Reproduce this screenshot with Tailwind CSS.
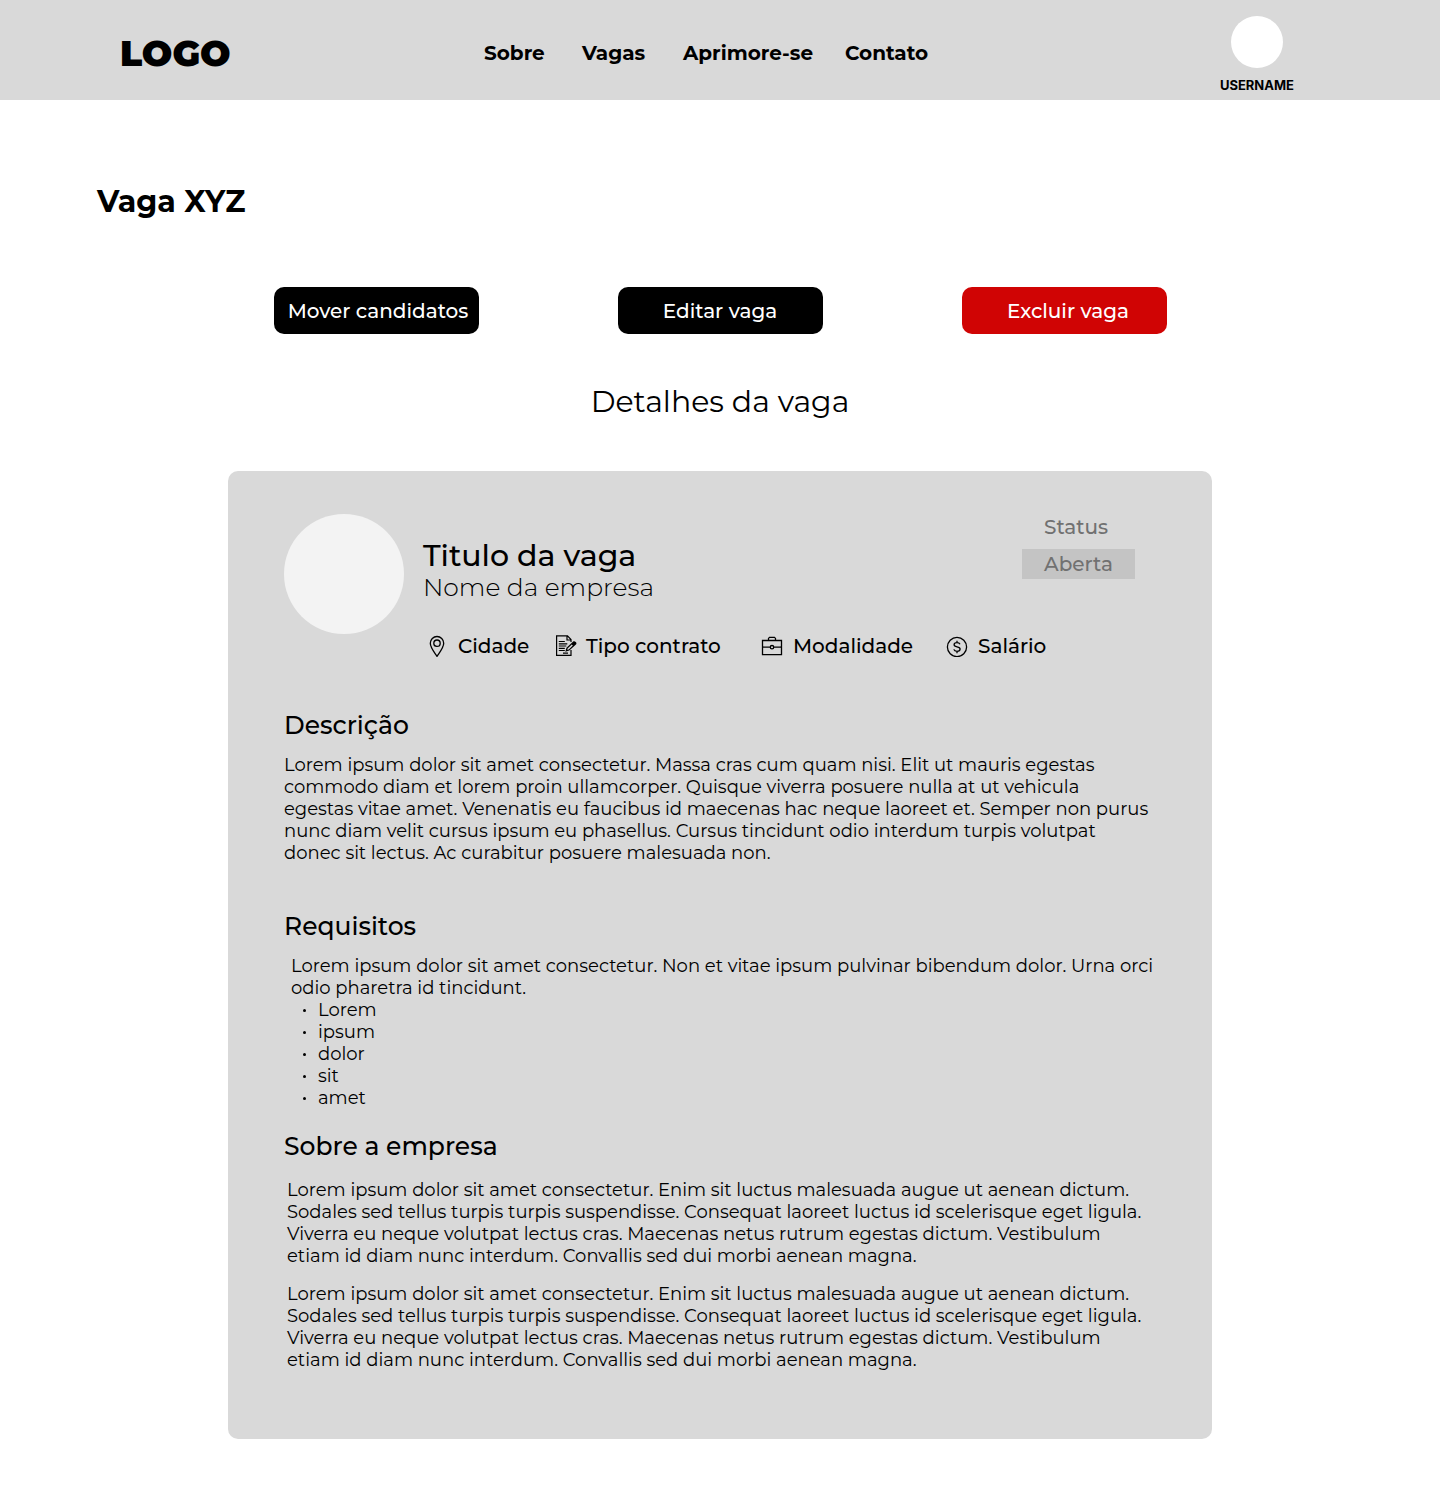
<!DOCTYPE html>
<html lang="pt-BR">
<head>
<meta charset="utf-8">
<meta name="viewport" content="width=device-width, initial-scale=1">
<title>Vaga XYZ</title>
<script src="https://cdn.jsdelivr.net/npm/@tailwindcss/browser@4"></script>
</head>
<body class="bg-white font-[Montserrat,Inter,sans-serif] text-black">
<header class="flex min-h-[100px] items-start bg-[#d9d9d9] pr-[146px] pl-[120px]">
  <a href="#" class="mt-[29px] w-[364px] text-[36px] leading-[48px] font-black">LOGO</a>
  <nav class="mt-[39px] grid grid-cols-[98px_101px_162px_90px] text-[20px] leading-7 font-bold whitespace-nowrap">
    <a href="#">Sobre</a>
    <a href="#">Vagas</a>
    <a href="#">Aprimore-se</a>
    <a href="#">Contato</a>
  </nav>
  <a href="#" class="mt-4 ml-auto flex flex-col items-center">
    <span class="size-[52px] rounded-full bg-white"></span>
    <span class="mt-2 font-[Inter,sans-serif] text-[13px] leading-[18px] font-bold">USERNAME</span>
  </a>
</header>
<main class="pb-[61px]">
  <h1 class="mt-[82px] ml-[97px] text-[30px] leading-10 font-bold">Vaga XYZ</h1>
  <div class="mx-auto mt-[65px] flex max-w-[893px] justify-between text-[20px] leading-6 font-medium whitespace-nowrap text-white">
    <button type="button" class="h-[47px] w-[205px] rounded-[10px] bg-black pl-1">Mover candidatos</button>
    <button type="button" class="h-[47px] w-[205px] rounded-[10px] bg-black">Editar vaga</button>
    <button type="button" class="h-[47px] w-[205px] rounded-[10px] bg-[#d00404] pl-2">Excluir vaga</button>
  </div>
  <h2 class="mt-12 text-center text-[30px] leading-10">Detalhes da vaga</h2>
  <article class="mx-auto mt-[49px] max-w-[984px] rounded-[10px] bg-[#d9d9d9] px-14 pt-[43px] pb-[68px]">
    <div class="flex items-start">
      <div class="size-[120px] shrink-0 rounded-full bg-[#f3f3f3]"></div>
      <div class="ml-[19px] grow pt-6">
        <h3 class="text-[30px] leading-9 font-medium">Titulo da vaga</h3>
        <p class="text-[25px] leading-[26px] font-light">Nome da empresa</p>
        <ul class="mt-8 grid grid-cols-[128px_206px_185px_110px] text-[20px] leading-7 font-medium whitespace-nowrap">
          <li class="flex items-center gap-[11px] pl-1">
            <svg class="h-[22px] w-5 shrink-0" viewBox="0 0 20 22" fill="none" stroke="#000" stroke-width="1.3"><path d="M10 21.300C7.500 17.500 3.300 12.500 3.300 8.200a6.700 6.700 0 0 1 13.400 0C16.700 12.500 12.500 17.500 10 21.300Z"/><circle cx="10" cy="8.200" r="3.200"/></svg>
            <span>Cidade</span></li>
          <li class="flex items-center gap-[9px] pl-1">
            <svg class="h-[22px] w-[22px] shrink-0" viewBox="0 0 22 22" fill="none" stroke="#000" stroke-width="1.200"><path d="M16 7V4.500L12.500 .8H1.600v19.600H16V15M12 .8v4.200h4M3.800 6.500h6M3.800 8.800h8.500M3.800 11h7.500M3.800 13.300h6M3.800 15.500h6M8 18.200h5"/><path fill="#000" stroke="none" fill-rule="evenodd" d="m10.300 16.700 1.200-4 6.700-6.300c1.500-1 4 1 3 2.800l-6.900 6.400Zm2.300-3.300-.4 1.300 1.600-.3 4-3.800-1-1.100Z"/></svg>
            <span>Tipo contrato</span></li>
          <li class="flex items-center gap-[10px] pl-1">
            <svg class="h-[22px] w-[22px] shrink-0" viewBox="0 0 22 22" fill="none" stroke="#000" stroke-width="1.300"><path d="M1.500 5.500h19v14.200h-19ZM7.500 5.500V3.400l1-1h5l1 1v2.100M1.500 11.500l1 .7h6.700m3.600 0h6.700l1-.7"/><circle cx="11" cy="12.200" r="1.700"/></svg>
            <span>Modalidade</span></li>
          <li class="flex items-center gap-[10px] pl-1">
            <svg class="h-[22px] w-[22px] shrink-0" viewBox="0 0 22 22" fill="none" stroke="#000" stroke-width="1.300"><circle cx="11" cy="12" r="9.600"/><path d="M14 9.300C13.500 8.200 12.500 7.700 11 7.700c-1.700 0-2.900.8-2.900 2.100 0 3 6 1.300 6 4.300 0 1.400-1.300 2.200-3.100 2.200-1.600 0-2.800-.7-3.200-1.900M11 5.700v2M11 16.300v2"/></svg>
            <span>Salário</span></li>
        </ul>
      </div>
      <dl class="-ml-[113px] mr-[21px] w-[113px] shrink-0 text-[20px] font-medium text-[#717171]">
        <dt class="pl-[22px] leading-[26px]">Status</dt>
        <dd class="mt-[9px] bg-[#c4c4c4] pl-[22px] leading-[30px]">Aberta</dd>
      </dl>
    </div>
    <section class="mt-[49px]">
      <h3 class="text-[25px] leading-8 font-medium">Descrição</h3>
      <p class="mt-[13px] text-[18px] leading-[22px] whitespace-nowrap">Lorem ipsum dolor sit amet consectetur. Massa cras cum quam nisi. Elit ut mauris egestas<br>commodo diam et lorem proin ullamcorper. Quisque viverra posuere nulla at ut vehicula<br>egestas vitae amet. Venenatis eu faucibus id maecenas hac neque laoreet et. Semper non purus<br>nunc diam velit cursus ipsum eu phasellus. Cursus tincidunt odio interdum turpis volutpat<br>donec sit lectus. Ac curabitur posuere malesuada non.</p>
    </section>
    <section class="mt-[46px]">
      <h3 class="text-[25px] leading-8 font-medium">Requisitos</h3>
      <div class="mt-[13px] pl-[7px] text-[18px] leading-[22px] whitespace-nowrap">
        <p>Lorem ipsum dolor sit amet consectetur. Non et vitae ipsum pulvinar bibendum dolor. Urna orci<br>odio pharetra id tincidunt.</p>
        <ul>
          <li class="flex items-center gap-3 pl-3"><span class="size-[3px] rounded-full bg-black"></span>Lorem</li>
          <li class="flex items-center gap-3 pl-3"><span class="size-[3px] rounded-full bg-black"></span>ipsum</li>
          <li class="flex items-center gap-3 pl-3"><span class="size-[3px] rounded-full bg-black"></span>dolor</li>
          <li class="flex items-center gap-3 pl-3"><span class="size-[3px] rounded-full bg-black"></span>sit</li>
          <li class="flex items-center gap-3 pl-3"><span class="size-[3px] rounded-full bg-black"></span>amet</li>
        </ul>
      </div>
    </section>
    <section class="mt-[21px]">
      <h3 class="text-[25px] leading-8 font-medium">Sobre a empresa</h3>
      <div class="mt-[17px] space-y-4 pl-[3px] text-[18px] leading-[22px] whitespace-nowrap">
        <p>Lorem ipsum dolor sit amet consectetur. Enim sit luctus malesuada augue ut aenean dictum.<br>Sodales sed tellus turpis turpis suspendisse. Consequat laoreet luctus id scelerisque eget ligula.<br>Viverra eu neque volutpat lectus cras. Maecenas netus rutrum egestas dictum. Vestibulum<br>etiam id diam nunc interdum. Convallis sed dui morbi aenean magna.</p>
        <p>Lorem ipsum dolor sit amet consectetur. Enim sit luctus malesuada augue ut aenean dictum.<br>Sodales sed tellus turpis turpis suspendisse. Consequat laoreet luctus id scelerisque eget ligula.<br>Viverra eu neque volutpat lectus cras. Maecenas netus rutrum egestas dictum. Vestibulum<br>etiam id diam nunc interdum. Convallis sed dui morbi aenean magna.</p>
      </div>
    </section>
  </article>
</main>
</body>
</html>
